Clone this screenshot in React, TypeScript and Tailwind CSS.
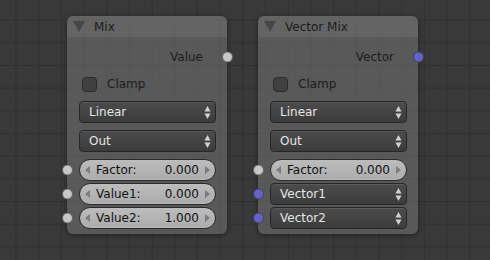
import { ReactNode } from "react"

type SocketKind = "value" | "vector"

function Socket({ kind, side }: { kind: SocketKind; side: "left" | "right" }) {
  const color = kind === "vector" ? "bg-[#6363c7]" : "bg-[#c7c7c7]"
  const pos = side === "left" ? "-left-[5.5px]" : "-right-[5.5px]"
  return (
    <span
      className={`absolute top-1/2 -translate-y-1/2 ${pos} w-[11px] h-[11px] rounded-full ${color} border border-[#2e2e2e]/60`}
    />
  )
}

function UpDown() {
  return (
    <svg width="7" height="15" viewBox="0 0 7 15" className="shrink-0">
      <path d="M3.5 1 L6.5 6.5 L0.5 6.5 Z" fill="#d2d2d2" />
      <path d="M0.5 8.5 L6.5 8.5 L3.5 14 Z" fill="#d2d2d2" />
    </svg>
  )
}

function Dropdown({ label }: { label: string }) {
  return (
    <div className="h-[22px] flex items-center justify-between pl-[9px] pr-[4px] rounded-[4px] border border-[#262626] bg-[linear-gradient(to_bottom,#4b4b4b,#3c3c3c)] shadow-[inset_0_1px_0_rgba(255,255,255,0.08)] text-[#e6e6e6]">
      <span>{label}</span>
      <UpDown />
    </div>
  )
}

function Slider({ label, value }: { label: string; value: string }) {
  return (
    <div className="h-[22px] flex items-center px-[5px] rounded-full border border-[#2a2a2a] bg-[linear-gradient(to_bottom,#bcbcbc,#acacac)] shadow-[inset_0_-1px_0_rgba(255,255,255,0.15)] text-[#111]">
      <svg width="5" height="8" viewBox="0 0 5 8" className="shrink-0">
        <path d="M5 0 L5 8 L0 4 Z" fill="#7c7c7c" />
      </svg>
      <span className="ml-[6px]">{label}</span>
      <span className="ml-auto mr-[6px]">{value}</span>
      <svg width="5" height="8" viewBox="0 0 5 8" className="shrink-0">
        <path d="M0 0 L0 8 L5 4 Z" fill="#7c7c7c" />
      </svg>
    </div>
  )
}

function Row({ children, socket, side = "left" }: { children: ReactNode; socket?: SocketKind; side?: "left" | "right" }) {
  return (
    <div className="relative px-[12px] pr-[11px]">
      {socket && <Socket kind={socket} side={side} />}
      {children}
    </div>
  )
}

interface NodeProps {
  title: string
  output: string
  outKind: SocketKind
  left: string
  inputs: ReactNode
}

function Node({ title, output, outKind, left, inputs }: NodeProps) {
  return (
    <div
      className={`absolute top-[16px] ${left} w-[160px] h-[218px] rounded-[6px] bg-[rgba(112,112,112,0.58)] shadow-[0_1px_5px_rgba(0,0,0,0.45)]`}
    >
      <div className="h-[22px] flex items-center pl-[6px] rounded-t-[6px] bg-[rgba(120,120,120,0.35)] border-b border-[rgba(0,0,0,0.08)]">
        <svg width="12" height="11" viewBox="0 0 12 11">
          <path d="M0 0 L12 0 L6 11 Z" fill="#464646" />
        </svg>
        <span className="ml-[9px] text-[#1c1c1c]">{title}</span>
      </div>
      <div className="flex flex-col pt-[9px]">
        <Row socket={outKind} side="right">
          <div className="h-[20px] flex items-center justify-end pr-[13px] text-[#1c1c1c]">{output}</div>
        </Row>
        <Row>
          <div className="h-[20px] mt-[7px] flex items-center pl-[3px] text-[#1c1c1c]">
            <span className="w-[15px] h-[15px] rounded-[4px] bg-[#404040] border border-[#2a2a2a]" />
            <span className="ml-[10px]">Clamp</span>
          </div>
        </Row>
        <div className="mt-[7px]">
          <Row>
            <Dropdown label="Linear" />
          </Row>
        </div>
        <div className="mt-[7px]">
          <Row>
            <Dropdown label="Out" />
          </Row>
        </div>
        <div className="mt-[7px] flex flex-col gap-[2px]">{inputs}</div>
      </div>
    </div>
  )
}

export default function App() {
  return (
    <div
      className="relative w-[490px] h-[260px] overflow-hidden bg-[#393939] bg-[linear-gradient(to_right,#303030_1px,transparent_1px),linear-gradient(to_bottom,#303030_1px,transparent_1px)] bg-[size:22.7px_22.7px] bg-[position:15.5px_19.5px] text-[12px] leading-none"
      style={{ fontFamily: '"DejaVu Sans", sans-serif' }}
    >
      <Node
        title="Mix"
        output="Value"
        outKind="value"
        left="left-[67px]"
        inputs={
          <>
            <Row socket="value">
              <Slider label="Factor:" value="0.000" />
            </Row>
            <Row socket="value">
              <Slider label="Value1:" value="0.000" />
            </Row>
            <Row socket="value">
              <Slider label="Value2:" value="1.000" />
            </Row>
          </>
        }
      />
      <Node
        title="Vector Mix"
        output="Vector"
        outKind="vector"
        left="left-[258px]"
        inputs={
          <>
            <Row socket="value">
              <Slider label="Factor:" value="0.000" />
            </Row>
            <Row socket="vector">
              <Dropdown label="Vector1" />
            </Row>
            <Row socket="vector">
              <Dropdown label="Vector2" />
            </Row>
          </>
        }
      />
    </div>
  )
}
